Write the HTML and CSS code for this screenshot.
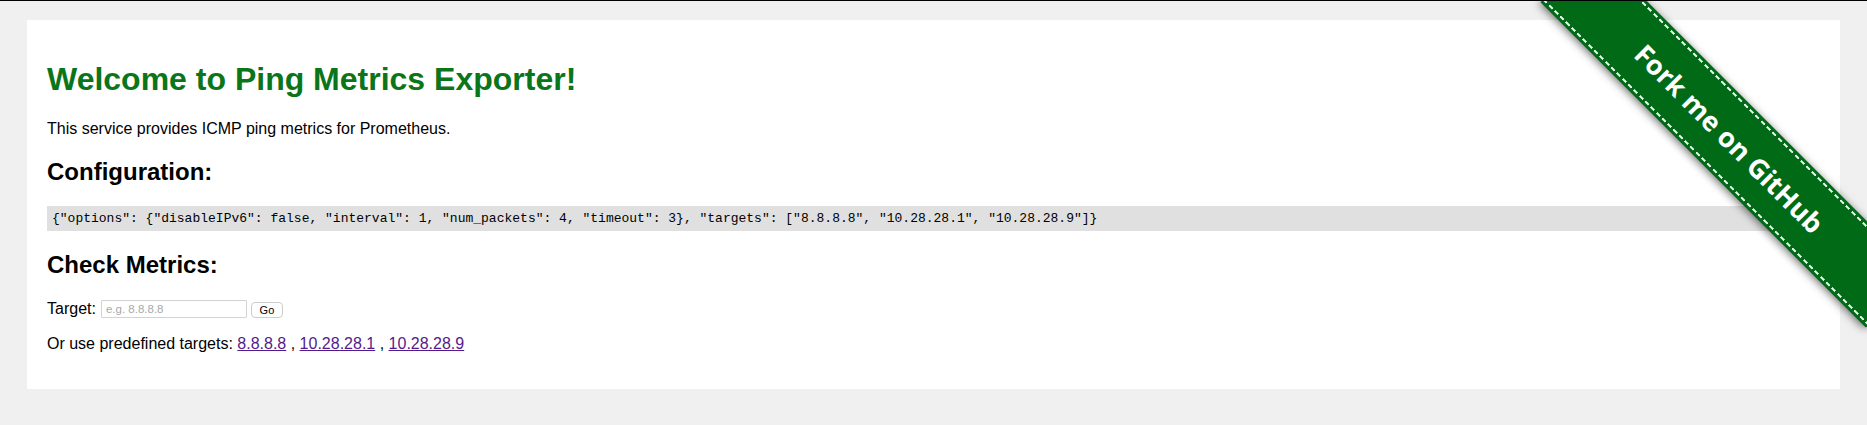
FILE: index.html
```html
<!DOCTYPE html>
<html lang="en">
<head>
<meta charset="utf-8">
<title>Ping Metrics Exporter</title>
<link rel="stylesheet" href="styles.css">
</head>
<body>
<div class="card">
  <h1 class="title">Welcome to Ping Metrics Exporter!</h1>
  <p class="text">This service provides ICMP ping metrics for Prometheus.</p>
  <h2 class="subtitle">Configuration:</h2>
  <pre class="config">{"options": {"disableIPv6": false, "interval": 1, "num_packets": 4, "timeout": 3}, "targets": ["8.8.8.8", "10.28.28.1", "10.28.28.9"]}</pre>
  <h2 class="subtitle">Check Metrics:</h2>
  <form class="check" action="#">
    <label class="check-label" for="target">Target:</label>
    <input class="check-input" id="target" type="text" placeholder="e.g. 8.8.8.8">
    <button class="check-button" type="button">Go</button>
  </form>
  <p class="text">Or use predefined targets: <a class="target-link" href="#">8.8.8.8</a> , <a class="target-link" href="#">10.28.28.1</a> , <a class="target-link" href="#">10.28.28.9</a></p>
</div>
<a class="ribbon" href="#"><span class="ribbon-band">Fork me on GitHub</span></a>
</body>
</html>
```
FILE: styles.css
```css
html {
  background: #f0f0f0;
}

body {
  margin: 0;
  padding: 19px 27px 0;
  border-top: 1px solid #000;
  background: #f0f0f0;
  font-family: "Liberation Sans", Arial, Helvetica, sans-serif;
  font-size: 16px;
  color: #000;
}

.card {
  background: #fff;
  padding: 20px;
}

.title {
  font-size: 32px;
  font-weight: bold;
  margin: 21.44px 0;
  color: #0a7519;
}

.text {
  margin: 16px 0;
}

.subtitle {
  font-size: 24px;
  font-weight: bold;
  margin: 19.92px 0;
}

.config {
  margin: 13px 0;
  padding: 5px;
  background: #e0e0e0;
  font-family: "Liberation Mono", "Courier New", monospace;
  font-size: 13px;
  white-space: pre;
}

.check {
  display: flex;
  align-items: center;
  gap: 4px;
  height: 20px;
  margin: 16px 0;
}

.check-label {
  line-height: 20px;
}

.check-input {
  box-sizing: border-box;
  width: 146px;
  height: 18px;
  margin: 0 0 0 1px;
  padding: 0 4px;
  border: 1px solid #d3d3d3;
  border-radius: 1px;
  font-family: "Liberation Sans", Arial, sans-serif;
  font-size: 11.5px;
  color: #000;
  background: #fff;
}

.check-input::placeholder {
  color: #a9a9a9;
}

.check-button {
  box-sizing: border-box;
  width: 32px;
  height: 16px;
  margin: 2px 0 0;
  padding: 0;
  border: 1px solid #cdcdcd;
  border-radius: 4px;
  background: #fff;
  font-family: "Liberation Sans", Arial, sans-serif;
  font-size: 11px;
  color: #000;
  line-height: 14px;
}

.target-link {
  color: #551a8b;
  text-decoration: underline;
}

.ribbon {
  position: absolute;
  top: 1px;
  right: 0;
  width: 350px;
  height: 350px;
  overflow: hidden;
  text-decoration: none;
}

.ribbon-band {
  position: absolute;
  left: -17px;
  top: 99px;
  width: 460px;
  height: 76px;
  display: flex;
  align-items: center;
  justify-content: center;
  background: #006a16;
  color: #fff;
  font-family: "Open Sans", "Noto Sans", sans-serif;
  font-weight: 700;
  font-size: 27px;
  transform: rotate(45deg);
  box-shadow: 0 2px 9px rgba(0, 0, 0, 0.55);
}

.ribbon-band::before,
.ribbon-band::after {
  content: "";
  position: absolute;
  left: 0;
  right: 0;
  height: 2px;
  background: repeating-linear-gradient(90deg, rgba(255, 255, 255, 0.95) 0 5px, transparent 5px 8px);
}

.ribbon-band::before {
  top: 3px;
}

.ribbon-band::after {
  bottom: 3px;
}
```
